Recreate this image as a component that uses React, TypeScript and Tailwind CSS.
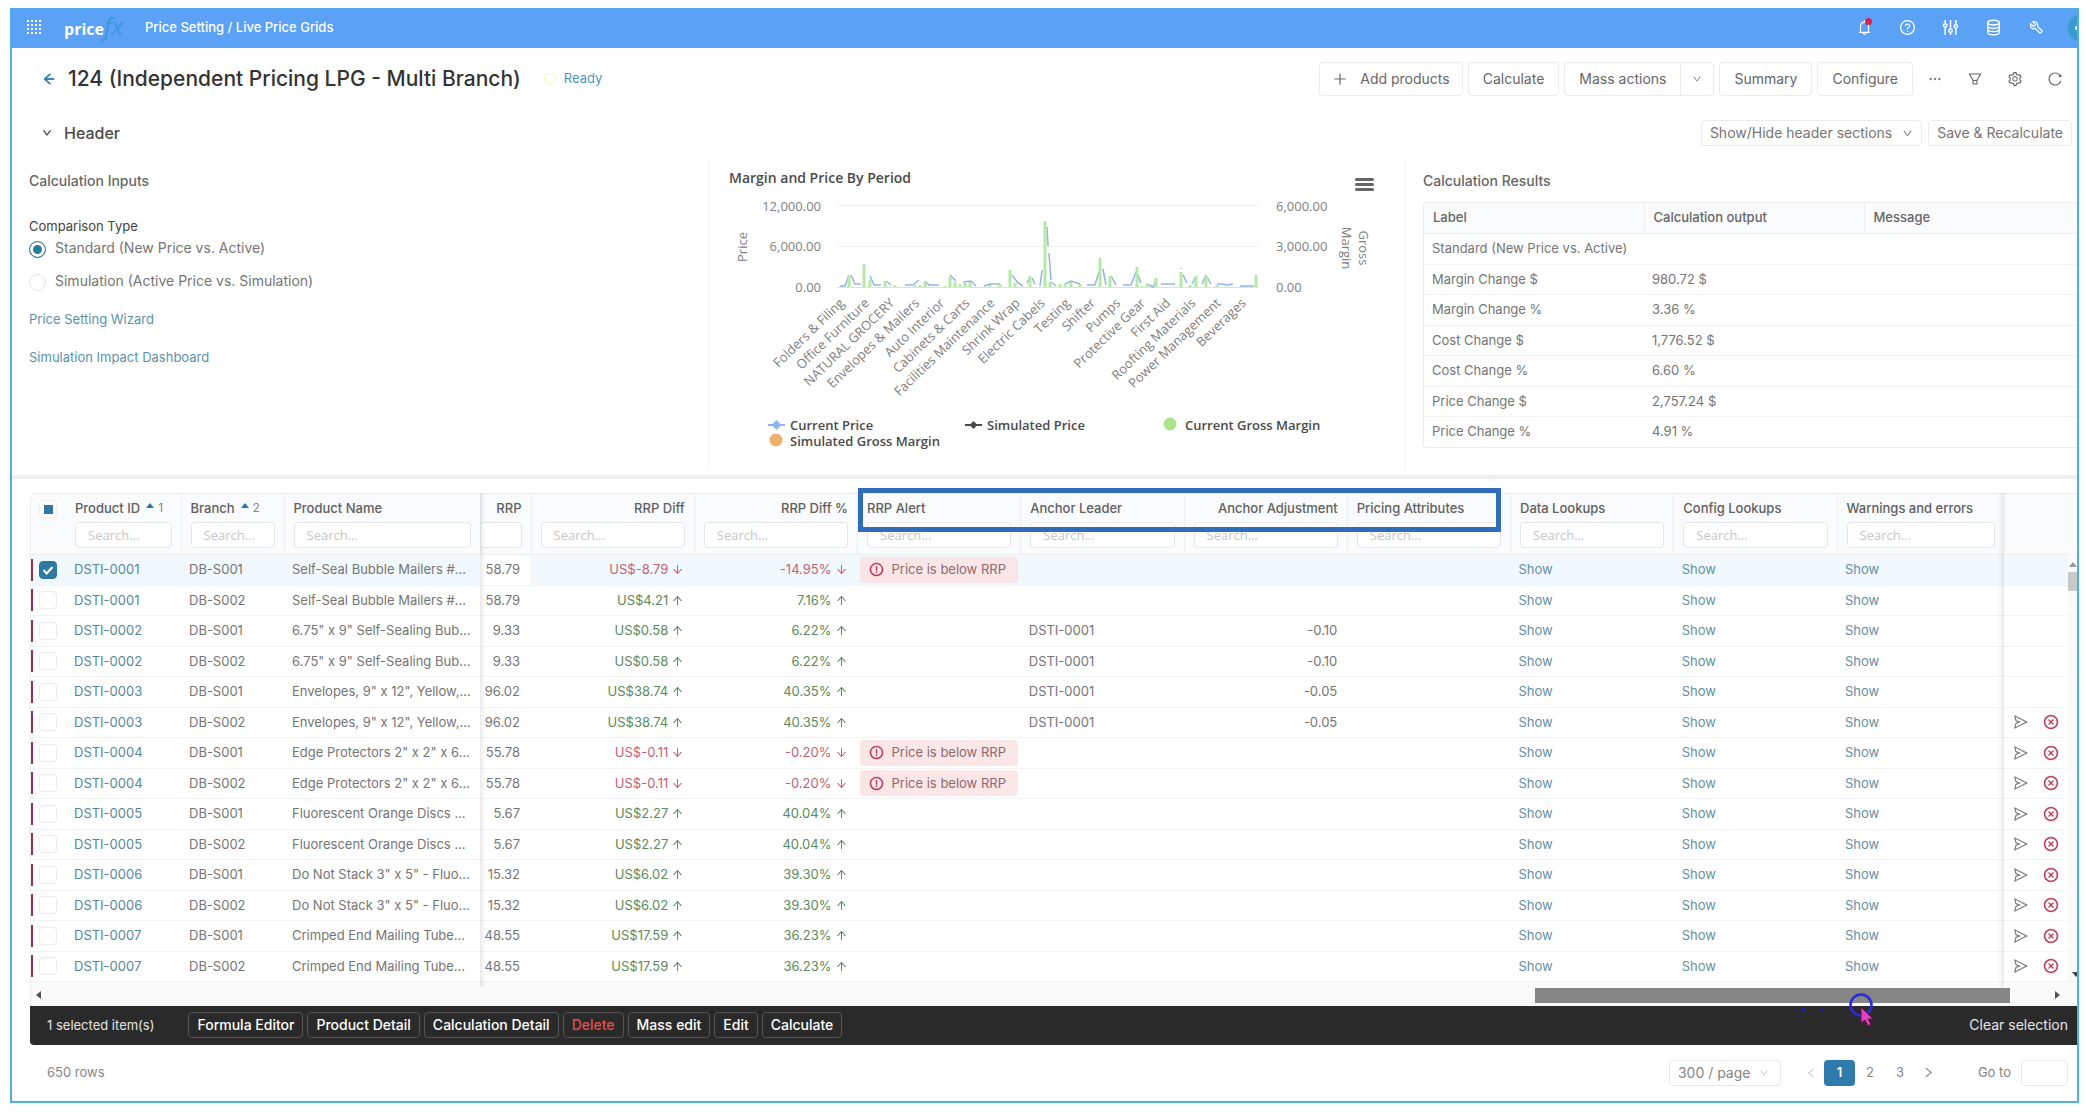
import * as React from 'react';
import {
  AiOutlineArrowDown,
  AiOutlineArrowLeft,
  AiOutlineArrowUp,
  AiOutlineBell,
  AiOutlineCloseCircle,
  AiOutlineDown,
  AiOutlineEllipsis,
  AiOutlineExclamationCircle,
  AiOutlineFilter,
  AiOutlineLeft,
  AiOutlinePlus,
  AiOutlineQuestionCircle,
  AiOutlineReload,
  AiOutlineRight,
  AiOutlineSend,
  AiOutlineSetting,
  AiOutlineTool,
} from 'react-icons/ai';

// --- Types ---
type PriceRow = {
  id: string;
  branch: string;
  name: string;
  rrp: string;
  diff: string;
  diffPct: string;
  leader?: string;
  adjustment?: string;
  actions?: boolean;
};

type Column = {
  title: string;
  align?: 'right';
  sort?: number;
};

// --- Data ---
const columns: Column[] = [
  { title: 'Product ID', sort: 1 },
  { title: 'Branch', sort: 2 },
  { title: 'Product Name' },
  { title: 'RRP', align: 'right' },
  { title: 'RRP Diff', align: 'right' },
  { title: 'RRP Diff %', align: 'right' },
  { title: 'RRP Alert' },
  { title: 'Anchor Leader' },
  { title: 'Anchor Adjustment', align: 'right' },
  { title: 'Pricing Attributes' },
  { title: 'Data Lookups' },
  { title: 'Config Lookups' },
  { title: 'Warnings and errors' },
];

const priceRows: PriceRow[] = [
  { id: 'DSTI-0001', branch: 'DB-S001', name: 'Self-Seal Bubble Mailers #...', rrp: '58.79', diff: 'US$-8.79', diffPct: '-14.95%' },
  { id: 'DSTI-0001', branch: 'DB-S002', name: 'Self-Seal Bubble Mailers #...', rrp: '58.79', diff: 'US$4.21', diffPct: '7.16%' },
  { id: 'DSTI-0002', branch: 'DB-S001', name: '6.75" x 9" Self-Sealing Bub...', rrp: '9.33', diff: 'US$0.58', diffPct: '6.22%', leader: 'DSTI-0001', adjustment: '-0.10' },
  { id: 'DSTI-0002', branch: 'DB-S002', name: '6.75" x 9" Self-Sealing Bub...', rrp: '9.33', diff: 'US$0.58', diffPct: '6.22%', leader: 'DSTI-0001', adjustment: '-0.10' },
  { id: 'DSTI-0003', branch: 'DB-S001', name: 'Envelopes, 9" x 12", Yellow,...', rrp: '96.02', diff: 'US$38.74', diffPct: '40.35%', leader: 'DSTI-0001', adjustment: '-0.05' },
  { id: 'DSTI-0003', branch: 'DB-S002', name: 'Envelopes, 9" x 12", Yellow,...', rrp: '96.02', diff: 'US$38.74', diffPct: '40.35%', leader: 'DSTI-0001', adjustment: '-0.05', actions: true },
  { id: 'DSTI-0004', branch: 'DB-S001', name: 'Edge Protectors 2" x 2" x 6...', rrp: '55.78', diff: 'US$-0.11', diffPct: '-0.20%', actions: true },
  { id: 'DSTI-0004', branch: 'DB-S002', name: 'Edge Protectors 2" x 2" x 6...', rrp: '55.78', diff: 'US$-0.11', diffPct: '-0.20%', actions: true },
  { id: 'DSTI-0005', branch: 'DB-S001', name: 'Fluorescent Orange Discs ...', rrp: '5.67', diff: 'US$2.27', diffPct: '40.04%', actions: true },
  { id: 'DSTI-0005', branch: 'DB-S002', name: 'Fluorescent Orange Discs ...', rrp: '5.67', diff: 'US$2.27', diffPct: '40.04%', actions: true },
  { id: 'DSTI-0006', branch: 'DB-S001', name: 'Do Not Stack 3" x 5" - Fluo...', rrp: '15.32', diff: 'US$6.02', diffPct: '39.30%', actions: true },
  { id: 'DSTI-0006', branch: 'DB-S002', name: 'Do Not Stack 3" x 5" - Fluo...', rrp: '15.32', diff: 'US$6.02', diffPct: '39.30%', actions: true },
  { id: 'DSTI-0007', branch: 'DB-S001', name: 'Crimped End Mailing Tube...', rrp: '48.55', diff: 'US$17.59', diffPct: '36.23%', actions: true },
  { id: 'DSTI-0007', branch: 'DB-S002', name: 'Crimped End Mailing Tube...', rrp: '48.55', diff: 'US$17.59', diffPct: '36.23%', actions: true },
];

const results = [
  ['Standard (New Price vs. Active)', ''],
  ['Margin Change $', '980.72 $'],
  ['Margin Change %', '3.36 %'],
  ['Cost Change $', '1,776.52 $'],
  ['Cost Change %', '6.60 %'],
  ['Price Change $', '2,757.24 $'],
  ['Price Change %', '4.91 %'],
];

const chartLabels = [
  'Folders & Filing', 'Office Furniture', 'NATURAL GROCERY', 'Envelopes & Mailers', 'Auto Interior',
  'Cabinets & Carts', 'Facilities Maintenance', 'Shrink Wrap', 'Electric Cabels', 'Testing', 'Shifter',
  'Pumps', 'Protective Gear', 'First Aid', 'Roofting Materials', 'Power Management', 'Beverages',
];

// [x, height] of the gross margin columns
const marginBars = [
  [140, 12], [155, 22], [161, 7], [176, 6], [186, 2], [206, 2], [211, 2], [216, 6], [236, 1], [241, 10],
  [246, 5], [251, 3], [256, 4], [261, 5], [281, 2], [291, 3], [301, 17], [306, 4], [321, 11], [336, 66],
  [341, 5], [351, 3], [356, 3], [362, 5], [371, 3], [391, 29], [401, 11], [428, 20], [433, 1], [438, 3],
  [447, 9], [472, 15], [481, 2], [487, 11], [497, 11], [508, 2], [547, 12],
];

const bulkActions = ['Formula Editor', 'Product Detail', 'Calculation Detail', 'Delete', 'Mass edit', 'Edit', 'Calculate'];

export default function App() {
  return (
    <div className="min-h-screen bg-white pt-2 pr-[7px] pb-[10px] pl-[10px] font-['Inter',sans-serif] text-sm text-[#757575]">
      <div className="overflow-hidden border-2 border-[#4daeea]">
        <TopBar />
        <TitleBar />
        <SectionBar />
        <div className="mb-[5px] grid h-[313px] grid-cols-[1fr_1fr_671px]">
          <CalculationInputs />
          <MarginChart />
          <CalculationResults />
        </div>
        <div className="h-1 bg-[#efefef]" />
        <PriceGrid />
        <Pagination />
      </div>
    </div>
  );
}

/* ---------------- Bars ---------------- */

function TopBar() {
  return (
    <header className="relative flex h-[38px] items-center bg-[#5ba1f6] pb-1 pl-[15px] text-white">
      <button aria-label="Apps" className="mr-[23px]">
        <svg width="14" height="14" viewBox="0 0 14 14" fill="currentColor">
          {[1, 5, 9, 13].map(y =>
            [1, 5, 9, 13].map(x => <rect key={`${x}-${y}`} x={x - 1} y={y - 1} width="2" height="2" />),
          )}
        </svg>
      </button>
      <a href="#" className="mr-[26px] flex w-[55px] items-baseline font-['Open_Sans',sans-serif] text-base leading-6 font-bold">
        price<span className="text-2xl leading-6 font-normal text-[#3f93dc] italic">fx</span>
      </a>
      <a href="#" className="text-[13px] font-medium">Price Setting / Live Price Grids</a>
      <div className="mr-[32px] ml-auto flex items-center gap-[26px] text-[17px]">
        <button aria-label="Notifications" className="relative">
          <AiOutlineBell />
          <span className="absolute -top-px right-px size-[7px] rounded-full bg-[#d6224a]" />
        </button>
        <button aria-label="Help"><AiOutlineQuestionCircle /></button>
        <button aria-label="Controls">
          <svg width="17" height="17" viewBox="0 0 16 16" fill="none" stroke="currentColor" strokeWidth="1.4">
            <path d="M3 1v3M3 8v7M8 1v8M8 13v2M13 1v4M13 9v6" />
            <circle cx="3" cy="6" r="1.6" />
            <circle cx="8" cy="11" r="1.6" />
            <circle cx="13" cy="7" r="1.6" />
          </svg>
        </button>
        <button aria-label="Data">
          <svg width="17" height="17" viewBox="0 0 16 16" fill="none" stroke="currentColor" strokeWidth="1.3">
            <ellipse cx="8" cy="3.4" rx="5.4" ry="2.2" />
            <path d="M2.6 3.4v9.2c0 1.2 2.4 2.2 5.4 2.2s5.4-1 5.4-2.2V3.4M2.6 6.5c0 1.2 2.4 2.2 5.4 2.2s5.4-1 5.4-2.2M2.6 9.6c0 1.2 2.4 2.2 5.4 2.2s5.4-1 5.4-2.2" />
          </svg>
        </button>
        <button aria-label="Tools"><AiOutlineTool className="-scale-x-100" /></button>
      </div>
      <button aria-label="Account" className="absolute top-1 -right-4 h-7 w-[25px] rounded-l-full bg-[#3a9bd0]">
        <span className="absolute top-3 left-[7px] size-1 rounded-full bg-white" />
      </button>
    </header>
  );
}

const outlined = 'flex items-center justify-center rounded border border-[#ececec] bg-white';

function TitleBar() {
  return (
    <div className="flex h-[61px] items-center pr-[14px] pl-[30px] text-[#666]">
      <a href="#" aria-label="Back" className="mr-3 text-sm text-[#2c7aa3]"><AiOutlineArrowLeft className="stroke-[#2c7aa3] [stroke-width:60]" /></a>
      <h1 className="text-[21px] font-medium text-[#333]">124 (Independent Pricing LPG - Multi Branch)</h1>
      <span className="ml-[23px] size-3 rounded-full border border-[#f7f7a8]" />
      <span className="ml-2 text-[13px] text-[#4d96ba]">Ready</span>

      <div className="ml-auto flex items-center gap-[5px]">
        <button className={`${outlined} h-[34px] gap-3 px-3`}><AiOutlinePlus className="text-base" />Add products</button>
        <button className={`${outlined} h-[34px] px-[14px]`}>Calculate</button>
        <div className="flex">
          <button className={`${outlined} h-[34px] rounded-r-none px-[14px]`}>Mass actions</button>
          <button aria-label="More mass actions" className={`${outlined} -ml-px h-[34px] w-[34px] rounded-l-none text-[10px]`}><AiOutlineDown /></button>
        </div>
        <button className={`${outlined} h-[34px] px-[14px]`}>Summary</button>
        <button className={`${outlined} h-[34px] px-[14px]`}>Configure</button>
      </div>
      <div className="ml-[14px] flex items-center gap-6 text-base">
        <button aria-label="More"><AiOutlineEllipsis className="stroke-current [stroke-width:30]" /></button>
        <button aria-label="Filter"><AiOutlineFilter /></button>
        <button aria-label="Settings"><AiOutlineSetting /></button>
        <button aria-label="Reload"><AiOutlineReload /></button>
      </div>
    </div>
  );
}

function SectionBar() {
  return (
    <div className="flex h-12 items-center pr-[5px] pl-[30px]">
      <button aria-label="Collapse header" className="mr-3 text-[10px] text-[#333]"><AiOutlineDown className="stroke-[#333] [stroke-width:50]" /></button>
      <h2 className="text-base font-medium text-[#4a4a4a]">Header</h2>
      <div className="ml-auto flex gap-[6px]">
        <button className={`${outlined} h-[26px] gap-[10px] px-2`}>
          Show/Hide header sections
          <AiOutlineDown className="text-[11px]" />
        </button>
        <button className={`${outlined} h-[26px] px-2`}>Save &amp; Recalculate</button>
      </div>
    </div>
  );
}

/* ---------------- Header panels ---------------- */

function CalculationInputs() {
  const [mode, setMode] = React.useState('standard');
  const radio =
    'mt-[5px] size-[17px] appearance-none rounded-full border border-[#e4e4e4] bg-white checked:border-[#2c7aa3] checked:bg-[#2c7aa3] checked:shadow-[inset_0_0_0_3px_#fff]';

  return (
    <section className="border-r border-[#f3f3f3] px-[17px] pt-[14px]">
      <h3 className="leading-5 font-medium text-[#666]">Calculation Inputs</h3>
      <fieldset className="mt-[25px]">
        <legend className="text-[13px] leading-5 text-[#444]">Comparison Type</legend>
        <label className="flex h-[26px] gap-[9px] leading-6">
          <input type="radio" name="mode" className={radio} checked={mode === 'standard'} onChange={() => setMode('standard')} />
          Standard (New Price vs. Active)
        </label>
        <label className="mt-[7px] flex h-[26px] gap-[9px] leading-6">
          <input type="radio" name="mode" className={radio} checked={mode === 'simulation'} onChange={() => setMode('simulation')} />
          Simulation (Active Price vs. Simulation)
        </label>
      </fieldset>
      <a href="#" className="mt-[14px] block text-[13px] leading-5 text-[#5b92aa]">Price Setting Wizard</a>
      <a href="#" className="mt-[18px] block text-[13px] leading-5 text-[#5b92aa]">Simulation Impact Dashboard</a>
    </section>
  );
}

function MarginChart() {
  return (
    <section className="relative border-r border-[#f3f3f3]">
      <button aria-label="Chart menu" className="absolute top-[21px] right-[31px] flex w-[19px] flex-col gap-[2px]">
        <span className="h-[3px] rounded bg-[#666]" />
        <span className="h-[3px] rounded bg-[#666]" />
        <span className="h-[3px] rounded bg-[#666]" />
      </button>
      <svg viewBox="0 0 696 313" className="w-full font-['Open_Sans',sans-serif] text-[13px]" fill="#808080">
        <text x="20" y="26" className="text-sm font-semibold" fill="#4a4a4a">Margin and Price By Period</text>

        {/* Axes */}
        <path d="M128 48.5H550M128 89.5H550" stroke="#f0f0f0" />
        <path d="M128 130.5H550" stroke="#dcdfe8" />
        <g textAnchor="end">
          <text x="112" y="54">12,000.00</text>
          <text x="112" y="94">6,000.00</text>
          <text x="112" y="135">0.00</text>
        </g>
        <text x="567" y="54">6,000.00</text>
        <text x="567" y="94">3,000.00</text>
        <text x="567" y="135">0.00</text>
        <g textAnchor="middle">
          <text transform="translate(38 90) rotate(-90)">Price</text>
          <text transform="translate(650 91) rotate(90)">Gross</text>
          <text transform="translate(633 91) rotate(90)">Margin</text>
        </g>

        {/* Series */}
        <path
          fill="none"
          stroke="#8fb6e0"
          strokeWidth="1.5"
          d="M131 129H136L140 118M142 118L146 127H152M155 107v1M161 119L165 128H172M177 124l5 4M196 128h8l6-5M216 124l4 4h10M241 118l6 6M254 125L262 124L267 129M275 129l6-2h10M303 118l6 8l5 3M318 126l3-6M323 121l3 6M331 129L333 113M338 70L339 89M340 96L342 123M342 125l5 4M356 127l6-3l9 3M378 128h8L390 115M394 112L397 128M402 119L407 128M414 128H422L427 115M429 118L432 126M438 127l6 3l4-8M452 127h14M472 111v1M474 118L478 126M483 127L487 119M493 127l4-9M498 120l4 7M508 127h4l6 1l6-1M531 129H545"
        />
        {marginBars.map(([x, h]) => (
          <rect key={x} x={x - 1.5} y={130 - h} width="3" height={h} fill="#b5eaa6" />
        ))}
        {chartLabels.map((label, i) => (
          <text key={label} textAnchor="end" transform={`translate(${136 + i * 25.1} 147) rotate(-44)`}>{label}</text>
        ))}

        {/* Legend */}
        <g className="font-semibold" fill="#4a4a4a">
          <path d="M59 268H76" stroke="#8fb6ea" strokeWidth="2" />
          <path d="M67.500 263l5 5l-5 5l-5-5z" fill="#8fb6ea" />
          <text x="81" y="273">Current Price</text>
          <path d="M256 268H273" stroke="#4a4a4a" strokeWidth="2" />
          <path d="M264.500 264l4 4l-4 4l-4-4z" />
          <text x="278" y="273">Simulated Price</text>
          <circle cx="461" cy="267" r="6.500" fill="#a9e58f" />
          <text x="476" y="273">Current Gross Margin</text>
          <circle cx="67" cy="283" r="6.500" fill="#f0b06c" />
          <text x="81" y="289">Simulated Gross Margin</text>
        </g>
      </svg>
    </section>
  );
}

function CalculationResults() {
  return (
    <section className="pt-[14px] pl-[17px]">
      <h3 className="mb-[11px] leading-5 font-medium text-[#666]">Calculation Results</h3>
      <div className="overflow-hidden rounded-l border border-r-0 border-[#ececec]">
        <table className="w-full table-fixed text-left text-[13px]">
          <thead>
            <tr className="h-[30px] border-b border-[#ececec] bg-[#fafbfd] text-[#666]">
              <th className="w-[220px] border-r border-[#eee] pl-[9px] font-medium">Label</th>
              <th className="w-[220px] border-r border-[#eee] pl-[9px] font-medium">Calculation output</th>
              <th className="pl-[9px] font-medium">Message</th>
            </tr>
          </thead>
          <tbody>
            {results.map(([label, output]) => (
              <tr key={label} className="h-[31px] border-b border-[#f3f3f3] last:border-b-0 even:h-[30px]">
                <td className="pl-2">{label}</td>
                <td className="pl-2">{output}</td>
                <td />
              </tr>
            ))}
          </tbody>
        </table>
      </div>
    </section>
  );
}

/* ---------------- Price grid ---------------- */

function PriceGrid() {
  const [selected, setSelected] = React.useState<number[]>([0]);

  const toggle = (i: number) => {
    setSelected(prev => (prev.includes(i) ? prev.filter(x => x !== i) : [...prev, i]));
  };

  return (
    <section className="relative mt-[14px] ml-[18px]">
      <div className="rounded-tl border-t border-l border-[#ececec]">
        <table className="w-full table-fixed text-left text-[13px]">
          <colgroup>
            <col className="w-[35px]" />
            <col className="w-[115px]" />
            <col className="w-[103px]" />
            <col className="w-[196px]" />
            <col className="w-[51px]" />
            <col span={8} />
            <col className="w-[167px]" />
            <col className="w-[73px]" />
          </colgroup>
          <thead>
            <tr className="h-[60px] border-b border-[#ececec] bg-[#fafbfc]">
              <th className="pl-2 align-top">
                <label className="mt-[6px] flex size-[18px] items-center justify-center rounded-sm border border-[#eee] bg-white">
                  <input type="checkbox" aria-label="Select all" className="size-[9px] appearance-none bg-[#2c7aa3]" />
                </label>
              </th>
              {columns.map(c => <HeaderCell key={c.title} column={c} />)}
              <th />
            </tr>
          </thead>
          <tbody>
            {priceRows.map((r, i) => (
              <GridRow key={`${r.id}-${r.branch}`} row={r} selected={selected.includes(i)} onToggle={() => toggle(i)} />
            ))}
          </tbody>
        </table>

        {/* Horizontal scrollbar */}
        <div className="flex h-6 items-center bg-[#fafafa] pt-[3px] pr-[17px] pl-[5px]">
          <span className="border-y-4 border-r-5 border-y-transparent border-r-[#555]" />
          <span className="mr-[45px] ml-auto h-[15px] w-[475px] bg-[#868686]" />
          <span className="border-y-4 border-l-5 border-y-transparent border-l-[#555]" />
        </div>
      </div>

      {/* Edges of the frozen columns */}
      <div className="pointer-events-none absolute top-0 left-[450px] h-[494px] w-[6px] bg-gradient-to-r from-black/8 to-transparent" />
      <div className="pointer-events-none absolute top-0 right-[73px] h-[494px] w-[6px] bg-gradient-to-l from-black/8 to-transparent" />

      {/* Vertical scrollbar */}
      <div className="absolute top-[61px] right-0 flex h-[427px] w-[9px] flex-col items-end overflow-hidden bg-[#fafafa]">
        <span className="mt-[8px] border-x-4 border-b-5 border-x-transparent border-b-[#999]" />
        <span className="mt-[5px] h-[19px] w-full bg-[#c9c9c9]" />
        <span className="mt-auto mb-[4px] -mr-[3px] border-x-4 border-t-5 border-x-transparent border-t-[#444]" />
      </div>

      <BulkBar count={selected.length} onClear={() => setSelected([])} />

      {/* Callout round the RRP and anchor columns */}
      <div className="pointer-events-none absolute -top-[5px] left-[828px] h-[44px] w-[643px] border-5 border-[#2f6cbb]" />

      {/* Pointer */}
      <svg className="pointer-events-none absolute top-[500px] right-[203px]" width="84" height="34" viewBox="0 0 84 34">
        <circle cx="71" cy="12" r="10.500" fill="none" stroke="#2a2adf" strokeWidth="2.500" />
        <path d="M71 14v16l4-3l3 6l3-2l-3-5h5z" fill="#e83fc0" stroke="#5a1048" />
        <circle cx="13" cy="17" r="1.800" fill="#1c1ce0" />
        <circle cx="32" cy="17" r="1.500" fill="#1c1cc0" />
      </svg>
    </section>
  );
}

function HeaderCell({ column }: { column: Column }) {
  const right = column.align === 'right';
  return (
    <th className="overflow-hidden border-r border-[#eee] px-[9px] align-top font-medium text-[#606060]">
      <div className={`mt-1 flex h-5 items-center whitespace-nowrap ${right ? 'justify-end' : ''}`}>
        {column.title}
        {column.sort && (
          <>
            <span className="mr-1 mb-[6px] ml-[6px] border-x-4 border-b-5 border-x-transparent border-b-[#2c7aa3]" />
            <span className="text-xs font-normal text-[#888]">{column.sort}</span>
          </>
        )}
      </div>
      <input
        aria-label={`Search ${column.title}`}
        placeholder={column.title === 'RRP' ? '' : 'Search...'}
        className={`mt-1 block h-[26px] rounded-sm border border-[#e6e6e6] bg-white px-3 font-['Open_Sans',sans-serif] text-[13px] font-normal placeholder:text-[#c6c6c6] ${column.title === 'RRP' ? '-ml-[10px] w-[42px]' : 'w-full'}`}
      />
    </th>
  );
}

function GridRow({ row, selected, onToggle }: { row: PriceRow; selected: boolean; onToggle: () => void }) {
  const down = row.diff.includes('-');
  const tone = down ? 'text-[#c25f72]' : 'text-[#5b8a5b]';
  const Arrow = down ? AiOutlineArrowDown : AiOutlineArrowUp;

  return (
    <tr className={`h-[31px] border-b border-[#f3f4f5] even:h-[30px] ${selected ? 'bg-[#f1f9fe]' : ''}`}>
      <td>
        <div className="flex items-center gap-[6px]">
          <span className="h-[22px] w-[2px] bg-[#93344f]" />
          <label className="relative flex size-[18px] text-white">
            <input
              type="checkbox"
              aria-label={`Select ${row.id} ${row.branch}`}
              checked={selected}
              onChange={onToggle}
              className="size-[18px] appearance-none rounded border border-[#ebebeb] bg-white checked:border-[#2c7aa3] checked:bg-[#2c7aa3]"
            />
            {selected && (
              <svg className="pointer-events-none absolute inset-0" viewBox="0 0 18 18" fill="none" stroke="currentColor" strokeWidth="2">
                <path d="M4.500 9l3.200 3.500l5.800-6.500" />
              </svg>
            )}
          </label>
        </div>
      </td>
      <td className="px-2"><a href="#" className="text-[#55879d]">{row.id}</a></td>
      <td className="px-2">{row.branch}</td>
      <td className="px-2 whitespace-nowrap">{row.name}</td>
      <td className="bg-white pr-[11px] text-right">{row.rrp}</td>
      <td className={`px-[10px] ${tone}`}>
        <span className="flex items-center justify-end gap-[3px]">{row.diff}<Arrow className="text-[13px]" /></span>
      </td>
      <td className={`px-[10px] ${tone}`}>
        <span className="flex items-center justify-end gap-[3px]">{row.diffPct}<Arrow className="text-[13px]" /></span>
      </td>
      <td className="p-0">
        {down && (
          <span className="ml-[2px] flex h-[26px] w-[158px] items-center gap-2 rounded bg-[#fbe6e7] pl-[9px] whitespace-nowrap text-[#8c6a6e]">
            <AiOutlineExclamationCircle className="stroke-[#b5304f] text-[15px] text-[#b5304f] [stroke-width:25]" />
            Price is below RRP
          </span>
        )}
      </td>
      <td className="px-2">{row.leader}</td>
      <td className="px-[10px] text-right">{row.adjustment}</td>
      <td />
      <td className="px-2"><a href="#" className="text-[#658fa2]">Show</a></td>
      <td className="px-2"><a href="#" className="text-[#658fa2]">Show</a></td>
      <td className="px-2"><a href="#" className="text-[#658fa2]">Show</a></td>
      <td>
        {row.actions && (
          <div className="flex items-center gap-[14px] pl-[9px] text-base">
            <button aria-label="Submit" className="text-[#777]"><AiOutlineSend /></button>
            <button aria-label="Reject" className="text-[#b5304f]"><AiOutlineCloseCircle className="stroke-current [stroke-width:20]" /></button>
          </div>
        )}
      </td>
    </tr>
  );
}

function BulkBar({ count, onClear }: { count: number; onClear: () => void }) {
  return (
    <div className="flex h-[39px] items-center rounded-bl bg-[#2a2a2a] pr-[9px] pl-[17px] text-white">
      <span className="mr-[34px] text-[13px] text-[#e6e6e6]">{count} selected item(s)</span>
      <div className="flex gap-1">
        {bulkActions.map(a => (
          <button
            key={a}
            className={`h-[26px] rounded border border-[#555] px-2 font-medium ${a === 'Delete' ? 'text-[#e0504c]' : ''}`}
          >
            {a}
          </button>
        ))}
      </div>
      <button onClick={onClear} className="ml-auto text-[#e6e6e6]">Clear selection</button>
    </div>
  );
}

function Pagination() {
  return (
    <footer className="flex h-14 items-center pr-[9px] pl-[35px] text-[#858585]">
      <span className="mr-auto text-[13px]">650 rows</span>
      <div className="relative">
        <select aria-label="Rows per page" className="h-[26px] w-[112px] appearance-none rounded border border-[#e8e8e8] bg-white pl-2">
          <option>300 / page</option>
        </select>
        <AiOutlineDown className="pointer-events-none absolute top-2 right-3 text-[10px] text-[#bbb]" />
      </div>
      <div className="ml-[24px] flex items-center text-[13px]">
        <button aria-label="Previous page" className="flex w-[13px] justify-center text-xs text-[#c4c4c4]"><AiOutlineLeft /></button>
        <button className="ml-[6px] h-[26px] w-[31px] rounded bg-[#2f7bab] font-semibold text-white">1</button>
        <button className="w-[30px]">2</button>
        <button className="w-[30px]">3</button>
        <button aria-label="Next page" className="ml-[7px] text-[13px] text-[#777]"><AiOutlineRight /></button>
      </div>
      <label className="ml-[43px] flex items-center gap-[10px] text-[13px]">
        Go to
        <input className="h-[26px] w-[47px] rounded border border-[#e8e8e8] px-2" />
      </label>
    </footer>
  );
}
